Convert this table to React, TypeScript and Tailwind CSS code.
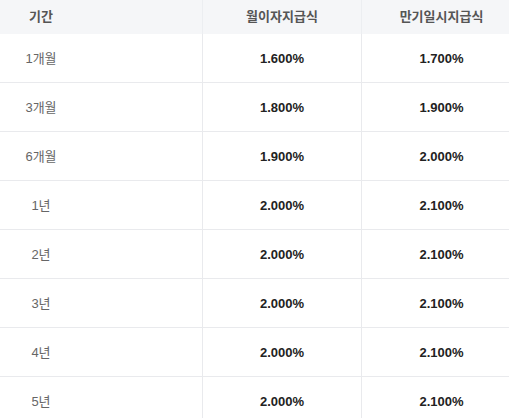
const rows = [
  { term: "1개월", monthly: "1.600%", maturity: "1.700%" },
  { term: "3개월", monthly: "1.800%", maturity: "1.900%" },
  { term: "6개월", monthly: "1.900%", maturity: "2.000%" },
  { term: "1년", monthly: "2.000%", maturity: "2.100%" },
  { term: "2년", monthly: "2.000%", maturity: "2.100%" },
  { term: "3년", monthly: "2.000%", maturity: "2.100%" },
  { term: "4년", monthly: "2.000%", maturity: "2.100%" },
  { term: "5년", monthly: "2.000%", maturity: "2.100%" },
];

export default function App() {
  return (
    <div className="w-[509px] h-[418px] overflow-hidden bg-white font-['Liberation_Sans','Noto_Sans_CJK_KR',sans-serif] text-[13px]">
      <div className="w-[521px]">
        {/* HEADER */}
        <div className="grid grid-cols-[202px_1px_158px_1px_159px] h-[34px] bg-[#f5f6f8] text-[#555] font-bold">
          <div className="flex items-center justify-center pr-[120px]">기간</div>
          <div className="bg-[#eceef1]" />
          <div className="flex items-center justify-center">월이자지급식</div>
          <div className="bg-[#eceef1]" />
          <div className="flex items-center justify-center">만기일시지급식</div>
        </div>

        {/* ROWS */}
        {rows.map((row) => (
          <div
            key={row.term}
            className="grid grid-cols-[202px_1px_158px_1px_159px] h-[49px] border-b border-[#e9eaed]"
          >
            <div className="flex items-center justify-center pt-[2px] pr-[120px] text-[#666]">{row.term}</div>
            <div className="bg-[#e9eaed]" />
            <div className="flex items-center justify-center pt-[2px] font-bold text-[#222]">{row.monthly}</div>
            <div className="bg-[#e9eaed]" />
            <div className="flex items-center justify-center pt-[2px] font-bold text-[#222]">{row.maturity}</div>
          </div>
        ))}
      </div>
    </div>
  );
}
